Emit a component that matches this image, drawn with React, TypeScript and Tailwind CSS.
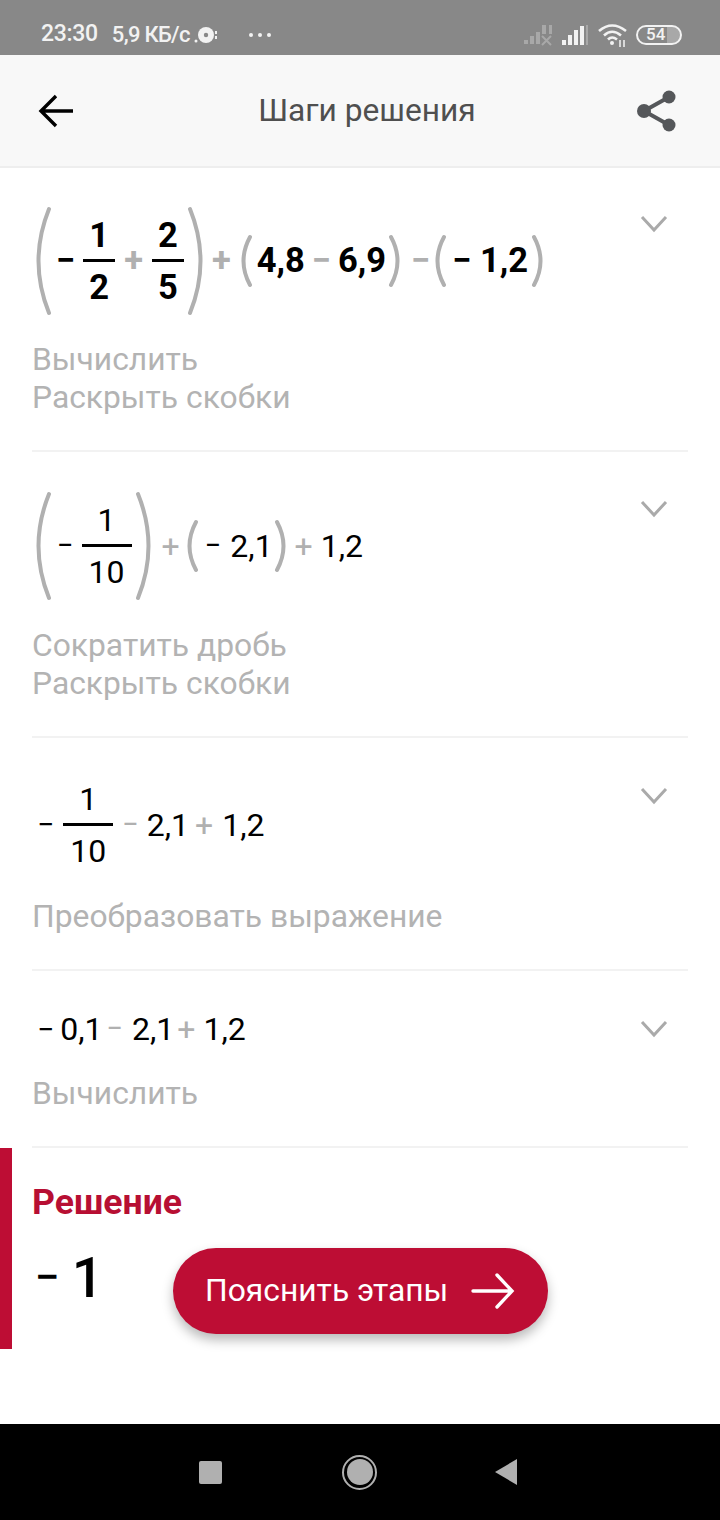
import React from 'react'

const GRAY = 'text-[#b0b0b0]'

const Paren = ({ side, tall, className = '' }: { side: 'l' | 'r'; tall?: boolean; className?: string }) => {
  const h = tall ? 110 : 54
  const w = tall ? 16 : 12
  const bow = tall ? 21 : 13
  const d =
    side === 'l'
      ? `M${w - 3} 3 Q${w - 3 - bow} ${h / 2} ${w - 3} ${h - 3}`
      : `M3 3 Q${3 + bow} ${h / 2} 3 ${h - 3}`
  return (
    <svg width={w} height={h} viewBox={`0 0 ${w} ${h}`} fill="none" className={`shrink-0 ${className}`}>
      <path d={d} stroke="#b0b0b0" strokeWidth="4" strokeLinecap="round" />
    </svg>
  )
}

const Frac = ({ top, bottom, w, className = '' }: { top: string; bottom: string; w: string; className?: string }) => (
  <div className={`flex flex-col items-center ${w} ${className}`}>
    <span className="leading-[38px] pb-[5px]">{top}</span>
    <div className="h-[3px] w-full bg-black" />
    <span className="leading-[38px] pt-[6px]">{bottom}</span>
  </div>
)

const Op = ({ c, className = '' }: { c: string; className?: string }) => (
  <span className={`${GRAY} ${className}`}>{c}</span>
)

const Step = ({
  className,
  exprClass,
  chevronClass,
  expr,
  lines,
}: {
  className: string
  exprClass: string
  chevronClass: string
  expr: React.ReactNode
  lines: string[]
}) => (
  <div className={`border-b-2 border-[#f2f2f2] flex justify-between items-start ${className}`}>
    <div>
      <div className={`flex items-center text-black ${exprClass}`}>{expr}</div>
      <div className="text-[31.8px] leading-[38px] text-[#b3b3b3]">
        {lines.map((l) => (
          <div key={l}>{l}</div>
        ))}
      </div>
    </div>
    <svg width="30" height="20" viewBox="0 0 30 20" fill="none" className={`mr-[19px] shrink-0 ${chevronClass}`}>
      <path d="M3 3 L15 16 L27 3" stroke="#aaaaaa" strokeWidth="3" />
    </svg>
  </div>
)

export default function App() {
  return (
    <div className="relative flex flex-col h-[1520px] w-[720px] bg-white overflow-hidden font-['Roboto',sans-serif]">
      {/* status bar */}
      <div className="h-[55px] bg-[#888888] flex items-center pt-[14px] pl-[41px] pr-[38px] text-[#f2f2f2] text-[23px] font-medium shrink-0">
        <span className="tracking-[-0.3px]">23:30</span>
        <span className="ml-[14px] text-[22px] tracking-[-0.7px]">5,9 КБ/с</span>
        <svg width="24" height="20" viewBox="0 0 24 20" className="ml-[4px]">
          <circle cx="2" cy="16" r="1.5" fill="#f2f2f2" />
          <circle cx="12" cy="10" r="8" fill="#f2f2f2" />
          <circle cx="12" cy="10" r="2.2" fill="#888888" />
          <rect x="21" y="6" width="2" height="3" fill="#f2f2f2" />
          <rect x="21" y="11" width="2" height="3" fill="#f2f2f2" />
        </svg>
        <div className="ml-[31px] flex gap-[5px]">
          <div className="w-[4px] h-[4px] rounded-full bg-[#f2f2f2]" />
          <div className="w-[4px] h-[4px] rounded-full bg-[#f2f2f2]" />
          <div className="w-[4px] h-[4px] rounded-full bg-[#f2f2f2]" />
        </div>
        <div className="ml-auto flex items-center">
          <svg width="30" height="22" viewBox="0 0 30 22">
            <g fill="#a8a8a8">
              <rect x="1" y="16" width="4" height="4" />
              <rect x="7" y="12" width="4" height="8" />
              <rect x="13" y="8" width="4" height="12" />
              <rect x="19" y="1" width="4" height="9" />
              <rect x="26" y="1" width="3" height="9" />
            </g>
            <path d="M19 12 L28 21 M28 12 L19 21" stroke="#a8a8a8" strokeWidth="2" />
          </svg>
          <svg width="28" height="22" viewBox="0 0 28 22" className="ml-[8px]">
            <rect x="1" y="16" width="4" height="5" fill="#f2f2f2" />
            <rect x="7" y="11" width="4" height="10" fill="#f2f2f2" />
            <rect x="13" y="6" width="4" height="15" fill="#f2f2f2" />
            <rect x="19" y="2" width="4" height="19" fill="#f2f2f2" />
            <rect x="25" y="1" width="2" height="20" fill="#a8a8a8" />
          </svg>
          <svg width="30" height="24" viewBox="0 0 30 24" fill="none" className="ml-[9px]">
            <path d="M1 8 Q14 -3 28 8" stroke="#f2f2f2" strokeWidth="2.6" />
            <path d="M6 12.5 Q14 5 23 12.5" stroke="#f2f2f2" strokeWidth="2.6" />
            <path d="M10 16.5 Q14 12.5 19 16.5" stroke="#f2f2f2" strokeWidth="2.6" />
            <circle cx="14" cy="20" r="2" fill="#f2f2f2" />
            <path d="M22 17 V24 M26 17 V24" stroke="#f2f2f2" strokeWidth="1.5" />
          </svg>
          <div className="ml-[8px] w-[46px] h-[20px] rounded-full border-2 border-[#f2f2f2] flex items-center pl-[8px] text-[17px] leading-none bg-[linear-gradient(90deg,transparent_70%,#a8a8a8_70%)]">
            54
          </div>
        </div>
      </div>

      {/* app bar */}
      <div className="h-[113px] bg-[#f8f8f8] border-b-2 border-[#eeeeee] flex items-center justify-between pl-[38px] pr-[43px] shrink-0">
        <svg width="36" height="34" viewBox="0 0 36 34" fill="none">
          <path d="M35 17 H4 M18 2 L3 17 L18 32" stroke="#000000" strokeWidth="3.4" />
        </svg>
        <span className="text-[31.7px] text-[#4f4f4f] ml-[23px] pt-[1px]">Шаги решения</span>
        <svg width="40" height="42" viewBox="0 0 40 42" fill="#55575a">
          <circle cx="32" cy="7" r="6.5" />
          <circle cx="7" cy="21" r="7" />
          <circle cx="32" cy="35" r="6.5" />
          <path d="M32 7 L7 21 L32 35" fill="none" stroke="#55575a" strokeWidth="4" />
        </svg>
      </div>

      {/* steps */}
      <div className="ml-[32px] mr-[32px] flex flex-col">
        <Step
          className="h-[284px] pt-[38px]"
          exprClass="h-[110px] mb-[24px] font-bold text-[34.5px]"
          chevronClass="mt-[8px]"
          lines={['Вычислить', 'Раскрыть скобки']}
          expr={
            <>
              <Paren side="l" tall className="ml-[4px]" />
              <span className="ml-[4px]">−</span>
              <Frac top="1" bottom="2" w="w-[32px]" className="ml-[8px]" />
              <Op c="+" className="ml-[9px]" />
              <Frac top="2" bottom="5" w="w-[32px]" className="ml-[9px]" />
              <Paren side="r" tall className="ml-[3px]" />
              <Op c="+" className="ml-[9px]" />
              <Paren side="l" className="ml-[10px]" />
              <span className="ml-[4px]">4,8</span>
              <Op c="−" className="ml-[7px]" />
              <span className="ml-[7px]">6,9</span>
              <Paren side="r" className="ml-[2px]" />
              <Op c="−" className="ml-[11px]" />
              <Paren side="l" className="ml-[5px]" />
              <span className="ml-[5px]">− 1,2</span>
              <Paren side="r" className="ml-[3px]" />
            </>
          }
        />
        <Step
          className="h-[286px] pt-[39px]"
          exprClass="h-[110px] mb-[25px] text-[32px]"
          chevronClass="mt-[8px]"
          lines={['Сократить дробь', 'Раскрыть скобки']}
          expr={
            <>
              <Paren side="l" tall className="ml-[4px]" />
              <span className="ml-[5px] text-[29px]">−</span>
              <Frac top="1" bottom="10" w="w-[50px]" className="ml-[8px]" />
              <Paren side="r" tall className="ml-[3px]" />
              <Op c="+" className="ml-[11px]" />
              <Paren side="l" className="ml-[7px]" />
              <span className="ml-[6px] text-[29px]">−</span>
              <span className="ml-[9px]">2,1</span>
              <Paren side="r" className="ml-[1px]" />
              <Op c="+" className="ml-[9px]" />
              <span className="ml-[8px]">1,2</span>
            </>
          }
        />
        <Step
          className="h-[233px] pt-[44px]"
          exprClass="h-[85px] mb-[30px] text-[32px]"
          chevronClass="mt-[4px]"
          lines={['Преобразовать выражение']}
          expr={
            <>
              <span className="ml-[5px] text-[30px]">−</span>
              <Frac top="1" bottom="10" w="w-[50px]" className="ml-[9px]" />
              <Op c="−" className="ml-[9px] text-[29px]" />
              <span className="ml-[8px]">2,1</span>
              <Op c="+" className="ml-[6px]" />
              <span className="ml-[9px]">1,2</span>
            </>
          }
        />
        <Step
          className="h-[177px] pt-[38px]"
          exprClass="h-[40px] mb-[25px] text-[32px]"
          chevronClass="mt-[10px]"
          lines={['Вычислить']}
          expr={
            <>
              <span className="ml-[5px] text-[30px]">−</span>
              <span className="ml-[6px]">0,1</span>
              <Op c="−" className="ml-[4px] text-[29px]" />
              <span className="ml-[9px]">2,1</span>
              <Op c="+" className="ml-[3px]" />
              <span className="ml-[8px]">1,2</span>
            </>
          }
        />
      </div>

      {/* solution */}
      <div className="h-[201px] border-l-[12px] border-[#bd0d34] pl-[20px] pt-[35px] shrink-0">
        <div className="text-[35.6px] leading-[38px] font-bold text-[#b70f33]">Решение</div>
        <div className="flex items-start mt-[27px]">
          <span className="text-[56px] leading-[60px] text-black pl-[3px] font-medium">
            <span className="inline-block text-[44px] -translate-y-[5px]">−</span>
            <span className="ml-[12px]">1</span>
          </span>
          <button className="ml-auto mr-[172px] w-[375px] h-[86px] rounded-full bg-[#bd0d34] shadow-[0_6px_12px_rgba(0,0,0,0.28)] flex items-center pl-[32px] text-white text-[31.8px]">
            <span>Пояснить этапы</span>
            <svg width="44" height="38" viewBox="0 0 44 38" fill="none" className="ml-[23px]">
              <path d="M2 19 H40 M26 3 L41 19 L26 35" stroke="#ffffff" strokeWidth="3.4" strokeLinecap="round" />
            </svg>
          </button>
        </div>
      </div>

      {/* nav bar */}
      <div className="mt-auto h-[96px] bg-black flex items-center shrink-0 pl-[199px]">
        <div className="w-[23px] h-[23px] rounded-[2px] bg-[#b0b0b0]" />
        <div className="ml-[120px] w-[35px] h-[35px] rounded-full border-2 border-[#b0b0b0] flex items-center justify-center">
          <div className="w-[26px] h-[26px] rounded-full bg-[#b0b0b0]" />
        </div>
        <svg width="24" height="28" viewBox="0 0 24 28" className="ml-[117px]">
          <path d="M23 1 V27 L1 14 Z" fill="#b0b0b0" />
        </svg>
      </div>
    </div>
  )
}
